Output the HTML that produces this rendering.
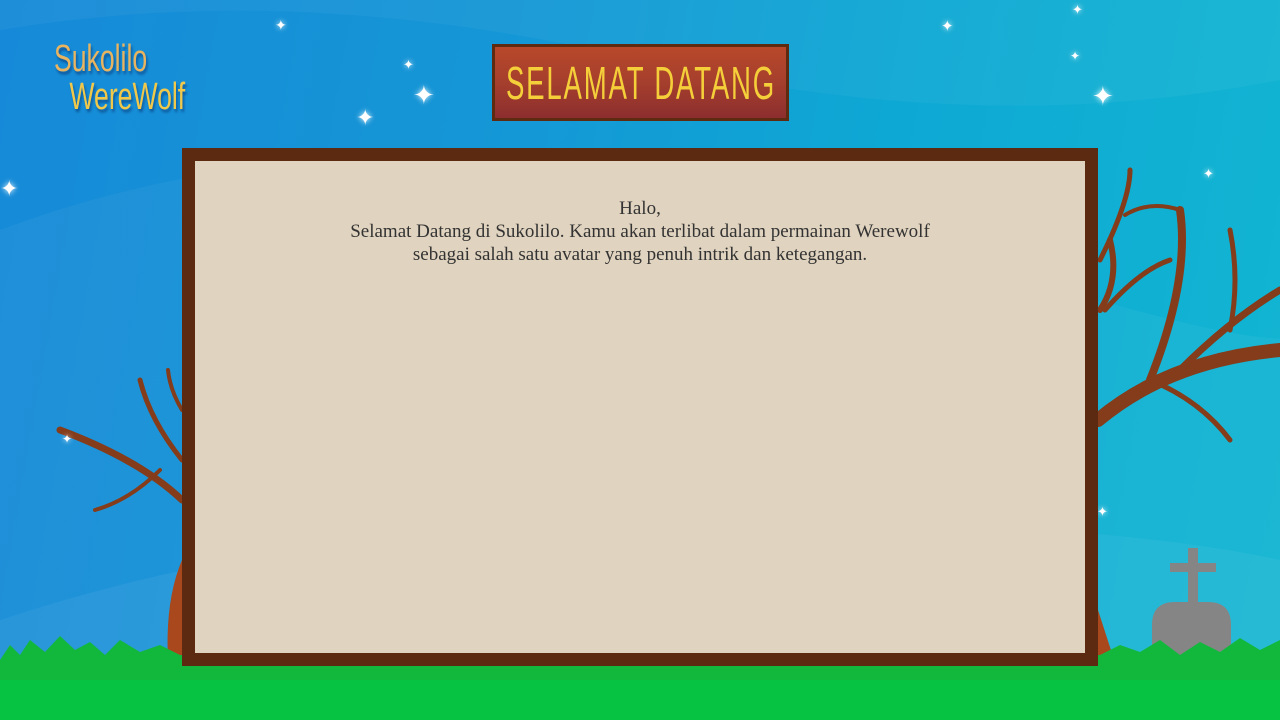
<!DOCTYPE html>
<html><head><meta charset="utf-8"><style>
html,body{margin:0;padding:0;width:1280px;height:720px;overflow:hidden}
body{position:relative;background:linear-gradient(100deg,#168ad8 0%,#1596d6 35%,#0ea8d4 65%,#12b6d2 100%);font-family:"Liberation Serif",serif}
.abs{position:absolute}
#frame{left:182px;top:148px;width:890px;height:492px;border:13px solid #5c2a11;background:#e0d3bf}
#text{position:absolute;left:0;right:0;top:36px;text-align:center;font-size:19px;line-height:23px;color:#333}
#sign{left:492px;top:44px;width:291px;height:71px;border:3px solid #5e2a10;background:linear-gradient(#b8482a,#a53f2d 50%,#8c2e2e);overflow:hidden}
#sign span{position:absolute;left:50%;top:50%;white-space:nowrap;color:#f5cf3a;font-family:"Liberation Sans Narrow","Liberation Sans",sans-serif;font-size:46px;transform:translate(-50%,-50%) scaleX(.6);letter-spacing:3px}
#logo{left:54px;top:40px;color:#e8b460;font-family:"Liberation Sans Narrow","Liberation Sans",sans-serif;font-size:38px;line-height:38px;text-shadow:2px 3px 3px rgba(0,0,60,.4);transform:scaleX(.7);transform-origin:0 0;white-space:nowrap}
.star{position:absolute;color:#fff;font-size:22px;line-height:1;text-shadow:0 0 6px #fff}
</style></head><body>
<svg class="abs" style="left:0;top:0" width="1280" height="720">
<path d="M0 30 Q300 -20 640 60 T1280 80 L1280 0 L0 0Z" fill="#fff" opacity=".04"/>
<path d="M0 230 Q400 80 900 240 T1280 300 L1280 720 L0 720Z" fill="#fff" opacity=".04"/>
<path d="M0 620 Q300 520 700 520 T1280 560 L1280 720 L0 720Z" fill="#fff" opacity=".05"/>
<g stroke="#843c1a" fill="none" stroke-linecap="round">
<path d="M1098 420 Q1170 360 1280 350" stroke-width="14"/>
<path d="M1150 380 Q1190 280 1180 210" stroke-width="8"/>
<path d="M1180 370 Q1230 320 1280 290" stroke-width="7"/>
<path d="M1230 330 Q1240 280 1230 230" stroke-width="5"/>
<path d="M1150 380 Q1200 400 1230 440" stroke-width="5"/>
<path d="M1100 260 Q1130 200 1130 170" stroke-width="5"/>
<path d="M1105 310 Q1140 270 1170 260" stroke-width="5"/>
<path d="M1180 210 Q1150 200 1125 215" stroke-width="4"/>
<path d="M1100 310 Q1120 280 1110 240" stroke-width="6"/>
<path d="M182 500 Q140 460 60 430" stroke-width="7"/>
<path d="M182 460 Q150 420 140 380" stroke-width="5"/>
<path d="M182 410 Q170 390 168 370" stroke-width="4"/>
<path d="M160 470 Q130 500 95 510" stroke-width="4"/>
</g>
<path d="M182 560 Q165 600 168 660 L182 660Z" fill="#a8481c"/>
<path d="M1098 610 L1118 672 L1098 672Z" fill="#a8481c"/>
<g fill="#858585"><rect x="1188" y="548" width="10" height="60"/><rect x="1170" y="563" width="46" height="9"/><path d="M1152 660 L1152 625 Q1152 602 1175 602 L1208 602 Q1231 602 1231 625 L1231 660Z"/></g>
<path d="M0 660 L10 645 L20 655 L30 640 L45 652 L60 636 L75 650 L90 642 L105 655 L120 640 L140 652 L160 645 L180 655 L1100 655 L1120 645 L1140 652 L1160 640 L1180 655 L1200 642 L1220 652 L1240 638 L1260 650 L1280 640 L1280 720 L0 720Z" fill="#12b83c"/>
<rect x="0" y="680" width="1280" height="40" fill="#06c442"/>
</svg>
<div class="star" style="left:0;top:178px">✦</div>
<div class="star" style="left:275px;top:20px;font-size:14px">✦</div>
<div class="star" style="left:356px;top:107px">✦</div>
<div class="star" style="left:413px;top:83px;font-size:26px">✦</div>
<div class="star" style="left:403px;top:58px;font-size:13px">✦</div>
<div class="star" style="left:1092px;top:84px;font-size:26px">✦</div>
<div class="star" style="left:941px;top:20px;font-size:15px">✦</div>
<div class="star" style="left:1072px;top:3px;font-size:13px">✦</div>
<div class="star" style="left:1070px;top:50px;font-size:12px">✦</div>
<div class="star" style="left:1203px;top:167px;font-size:13px">✦</div>
<div class="star" style="left:1097px;top:505px;font-size:13px">✦</div>
<div class="star" style="left:62px;top:433px;font-size:12px">✦</div>
<div id="logo" class="abs">Sukolilo<br><span style="margin-left:22px;color:#f0c84a">WereWolf</span></div>
<div id="sign" class="abs"><span>SELAMAT DATANG</span></div>
<div id="frame" class="abs"><div id="text">Halo,<br>Selamat Datang di Sukolilo. Kamu akan terlibat dalam permainan Werewolf<br>sebagai salah satu avatar yang penuh intrik dan ketegangan.</div></div>
</body></html>
